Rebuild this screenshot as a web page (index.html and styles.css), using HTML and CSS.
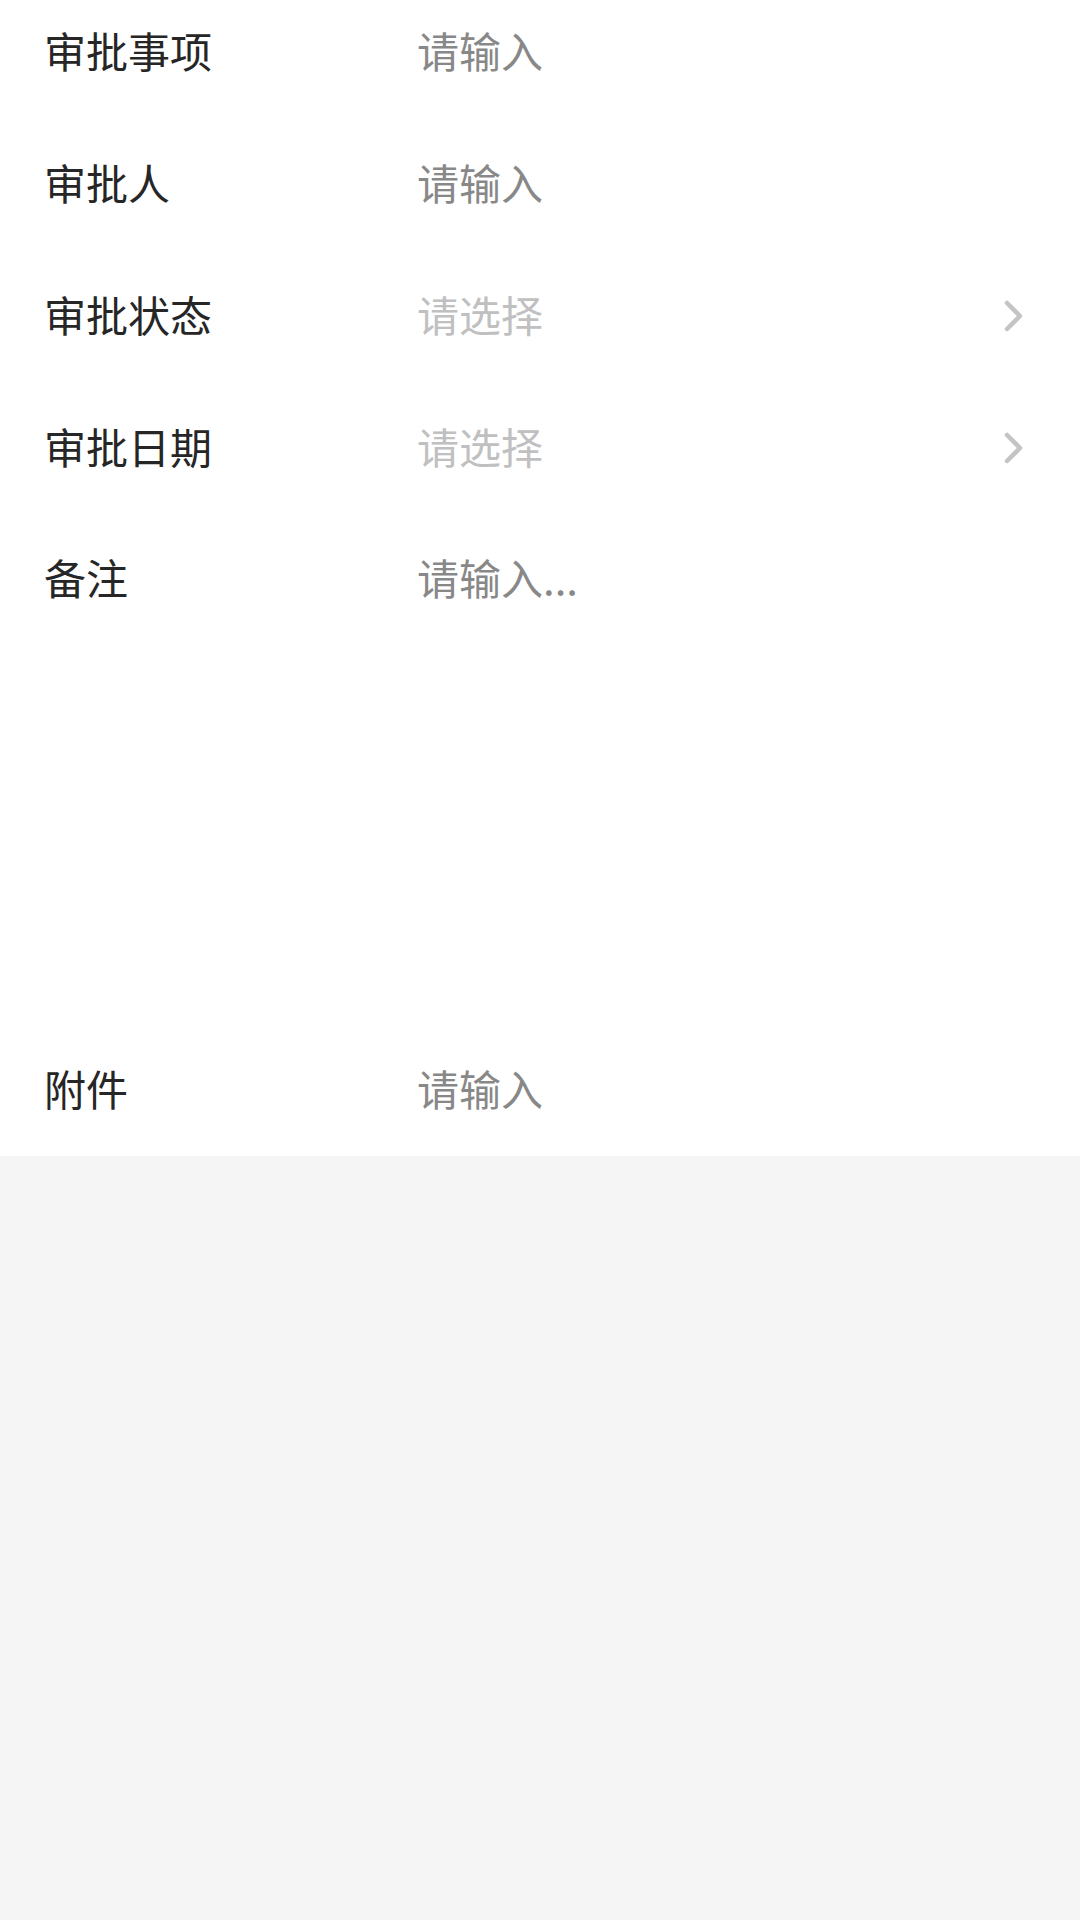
FILE: index.html
```html
<!DOCTYPE html>
<html lang="zh-cn">

<head>
  <meta charset="utf-8" />
  <title>审批</title>
  <link rel="stylesheet" href="styles.css">
</head>

<body>
  <div class="form">
    <div class="row">
      <span class="label">审批事项</span>
      <input class="field" type="text" placeholder="请输入" />
    </div>
    <div class="row">
      <span class="label">审批人</span>
      <input class="field" type="text" placeholder="请输入" />
    </div>
    <div class="row">
      <span class="label">审批状态</span>
      <span class="pick">请选择</span>
      <svg class="arrow" width="22" height="34" viewBox="0 0 22 34"><polyline points="4,4 17,17 4,30" /></svg>
    </div>
    <div class="row">
      <span class="label">审批日期</span>
      <span class="pick">请选择</span>
      <svg class="arrow" width="22" height="34" viewBox="0 0 22 34"><polyline points="4,4 17,17 4,30" /></svg>
    </div>
    <div class="row row-area">
      <span class="label">备注</span>
      <textarea class="area" placeholder="请输入..."></textarea>
    </div>
    <div class="row">
      <span class="label">附件</span>
      <input class="field" type="text" placeholder="请输入" />
    </div>
  </div>
</body>

</html>
```

FILE: styles.css
```css
*{margin:0;padding:0;box-sizing:border-box;}
html,body{height:100%;}
body{background:#f5f5f5;font-family:"Noto Sans CJK SC","Noto Sans",sans-serif;overflow:hidden;}

.form{background:#fff;margin-top:-14px;}
.row{display:flex;align-items:center;height:132px;padding:0 55px 6px 44px;font-size:42px;}
.label{width:373px;flex:none;color:#262626;}
.field{flex:1;border:none;outline:none;background:none;font:inherit;color:#262626;}
.field::placeholder{color:#888;}
.pick{flex:1;color:#c0c0c0;}
.arrow{flex:none;display:block;margin-top:6px;}
.arrow polyline{fill:none;stroke:#c4c4c4;stroke-width:4.5;stroke-linecap:round;stroke-linejoin:round;}

.row-area{height:510px;align-items:flex-start;padding-bottom:0;}
.row-area .label{line-height:126px;}
.area{flex:1;height:126px;border:none;outline:none;resize:none;background:none;font:inherit;line-height:126px;color:#262626;overflow:hidden;}
.area::placeholder{color:#888;}
```
